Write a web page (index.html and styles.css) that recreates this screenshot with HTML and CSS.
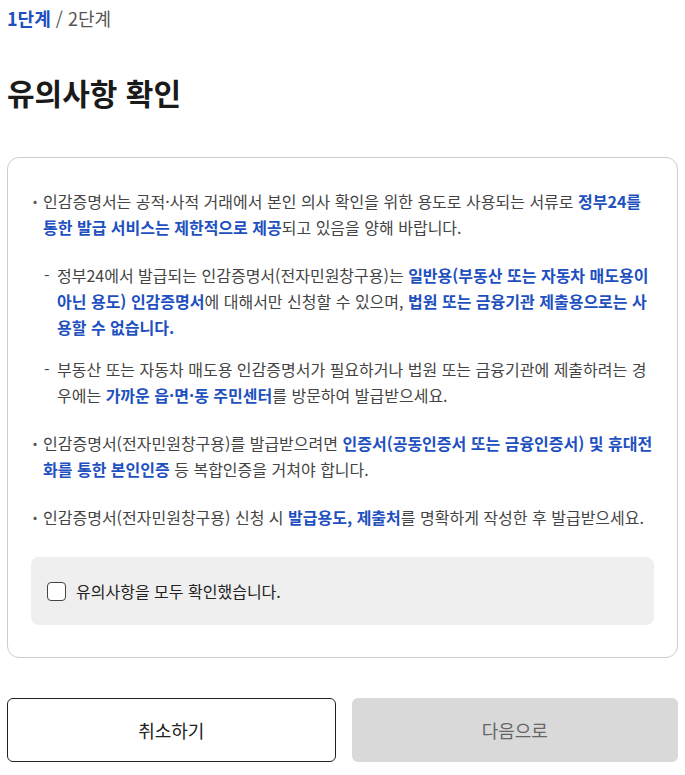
FILE: index.html
```html
<!DOCTYPE html>
<html lang="ko">
<head>
    <meta charset="UTF-8">
    <title>유의사항 확인</title>
    <link rel="stylesheet" href="styles.css">
</head>
<body>

<div class="steps">
    <span class="step-current">1단계</span> / 2단계
</div>

<h1 class="page-title">유의사항 확인</h1>

<div class="notice-card">
    <ul class="notice-list">
        <li>
            인감증명서는 공적·사적 거래에서 본인 의사 확인을 위한 용도로 사용되는 서류로 <strong>정부24를 통한 발급 서비스는 제한적으로 제공</strong>되고 있음을 양해 바랍니다.
            <ul class="sub-list">
                <li>정부24에서 발급되는 인감증명서(전자민원창구용)는 <strong>일반용(부동산 또는 자동차 매도용이 아닌 용도) 인감증명서</strong>에 대해서만 신청할 수 있으며, <strong>법원 또는 금융기관 제출용으로는 사용할 수 없습니다.</strong></li>
                <li>부동산 또는 자동차 매도용 인감증명서가 필요하거나 법원 또는 금융기관에 제출하려는 경우에는 <strong>가까운 읍·면·동 주민센터</strong>를 방문하여 발급받으세요.</li>
            </ul>
        </li>
        <li>인감증명서(전자민원창구용)를 발급받으려면 <strong>인증서(공동인증서 또는 금융인증서) 및 휴대전화를 통한 본인인증</strong> 등 복합인증을 거쳐야 합니다.</li>
        <li>인감증명서(전자민원창구용) 신청 시 <strong>발급용도, 제출처</strong>를 명확하게 작성한 후 발급받으세요.</li>
    </ul>

    <label class="agree-box">
        <input type="checkbox" class="agree-check">
        <span>유의사항을 모두 확인했습니다.</span>
    </label>
</div>

<div class="actions">
    <button class="btn btn-cancel">취소하기</button>
    <button class="btn btn-next" disabled>다음으로</button>
</div>

</body>
</html>
```

FILE: styles.css
```css
body {
    margin: 0;
    padding: 5px 7px;
    font-family: "Noto Sans CJK KR", "Noto Sans", sans-serif;
    color: #333;
    background-color: #fff;
}

.steps {
    font-size: 18px;
    line-height: 26px;
    color: #555;
}

.step-current {
    color: #1e50c0;
    font-weight: bold;
}

.page-title {
    margin: 41px 0 45px;
    font-size: 30px;
    line-height: 40px;
    font-weight: bold;
    color: #1a1a1a;
}

.notice-card {
    border: 1px solid #ccc;
    border-radius: 12px;
    padding: 30px 23px 32px;
}

.notice-list {
    list-style: none;
    margin: 0;
    padding: 0 1px;
    font-size: 16px;
    line-height: 26px;
    color: #444;
}

.notice-list > li {
    position: relative;
    padding-left: 11px;
    margin-bottom: 22px;
}

.notice-list > li:last-child {
    margin-bottom: 0;
}

.notice-list > li::before {
    content: "•";
    position: absolute;
    left: 1px;
    top: 0;
    font-size: 12px;
    color: #555;
}

.notice-list strong {
    color: #1e50c0;
}

.sub-list {
    list-style: none;
    margin: 22px 0 0;
    padding: 0;
}

.sub-list li {
    position: relative;
    padding-left: 14px;
    margin-bottom: 16px;
}

.sub-list li:last-child {
    margin-bottom: 0;
}

.sub-list li::before {
    content: "-";
    position: absolute;
    left: 1px;
    top: 0;
}

.agree-box {
    display: flex;
    align-items: center;
    gap: 10px;
    margin-top: 27px;
    height: 68px;
    padding: 0 16px;
    background-color: #efefef;
    border-radius: 8px;
    font-size: 16px;
    color: #222;
    cursor: pointer;
}

.agree-check {
    appearance: none;
    margin: 0;
    width: 19px;
    height: 19px;
    border: 1px solid #444;
    border-radius: 4px;
    background-color: #fff;
}

.actions {
    display: flex;
    gap: 16px;
    margin-top: 40px;
}

.btn {
    flex: 1;
    height: 64px;
    font-family: inherit;
    font-size: 18px;
    border-radius: 6px;
    cursor: pointer;
}

.btn-cancel {
    background-color: #fff;
    border: 1px solid #222;
    color: #222;
}

.btn-next {
    background-color: #d9d9d9;
    border: none;
    color: #666;
}
```
